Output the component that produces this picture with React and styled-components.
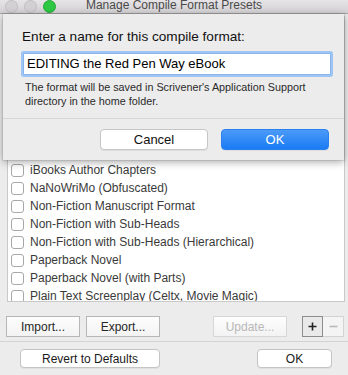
import React from 'react';
import styled, { createGlobalStyle } from 'styled-components';

const GlobalStyle = createGlobalStyle`
  html, body {
    margin: 0;
    padding: 0;
    background: #ececec;
  }
  body {
    font-family: "Liberation Sans", Arial, sans-serif;
    -webkit-font-smoothing: antialiased;
  }
`;

const Window = styled.div`
  position: relative;
  width: 348px;
  height: 375px;
  overflow: hidden;
  background: #ececec;
  display: flex;
  flex-direction: column;
`;

const TitleBar = styled.div`
  height: 13px;
  flex: none;
  display: grid;
  grid-template-columns: 1fr auto 1fr;
  align-items: start;
  background: linear-gradient(to bottom, #e6e4e6, #d4d2d4);
  border-bottom: 1px solid #a9a9a9;
`;

const Lights = styled.div`
  display: flex;
  gap: 5px;
  padding-left: 5px;
  margin-top: 0;
`;

const Light = styled.span`
  width: 11px;
  height: 11px;
  border-radius: 50%;
  background: ${p => (p.$green ? '#2ec845' : '#d3d1d3')};
  border: 1px solid ${p => (p.$green ? '#23a936' : '#c1bfc1')};
  & + & { margin-left: 1px; }
`;

const Title = styled.div`
  font-size: 12px;
  line-height: 13px;
  color: #4a4a4a;
  margin-top: -1px;
  white-space: nowrap;
`;

const Body = styled.div`
  position: relative;
  flex: 1;
  display: flex;
  flex-direction: column;
`;

const ListSection = styled.div`
  padding: 2px 3px 0 7px;
`;

const List = styled.div`
  height: 284px;
  box-sizing: content-box;
  background: #fff;
  border: 1px solid #c9c9c9;
  overflow: hidden;
  padding-top: 0;
`;

const ScrollOffset = styled.div`
  height: 144px;
`;

const Row = styled.label`
  height: 18px;
  display: flex;
  align-items: center;
  padding-left: 3px;
  font-size: 12px;
  color: #3a3a3a;
  white-space: nowrap;
`;

const Check = styled.span`
  width: 11px;
  height: 11px;
  flex: none;
  border: 1px solid #a8a8a8;
  border-radius: 3px;
  background: #fff;
  margin-right: 6px;
`;

const ToolRow = styled.div`
  display: flex;
  align-items: center;
  padding: 14px 4px 0 6px;
`;

const Bevel = styled.button`
  height: 21px;
  width: ${p => p.$w || 74}px;
  padding: 0;
  font-family: inherit;
  font-size: 12px;
  color: ${p => (p.$disabled ? '#b7b7b7' : '#262626')};
  background: linear-gradient(to bottom, #fdfdfd, #f3f3f3);
  border: 1px solid ${p => (p.$disabled ? '#d6d6d6' : '#b6b6b6')};
  border-radius: 0;
  margin-left: ${p => p.$ml || 0}px;
`;

const Spacer = styled.div`
  flex: 1;
`;

const Segment = styled.div`
  display: flex;
  margin-left: 15px;
`;

const SegButton = styled.button`
  width: 21px;
  height: 21px;
  padding: 0;
  display: flex;
  align-items: center;
  justify-content: center;
  background: ${p => (p.$active ? '#e9e9e9' : '#f4f4f4')};
  border: 1px solid ${p => (p.$active ? '#8c8c8c' : '#d3d3d3')};
  border-left-width: ${p => (p.$active ? 1 : 0)}px;
`;

const Divider = styled.div`
  height: 1px;
  background: #d3d3d3;
  margin-top: 4px;
`;

const BottomRow = styled.div`
  display: flex;
  align-items: center;
  justify-content: space-between;
  padding: 7px 16px 0 20px;
`;

const Push = styled.button`
  height: 19px;
  width: ${p => p.$w}px;
  padding: 0;
  font-family: inherit;
  font-size: 12px;
  color: #1a1a1a;
  background: #fff;
  border: 1px solid #c4c4c4;
  border-radius: 4px;
  box-shadow: 0 1px 0 rgba(0, 0, 0, 0.05);
`;

const Sheet = styled.div`
  position: absolute;
  top: 0;
  left: 3px;
  width: 341px;
  height: 146px;
  background: #ececec;
  box-shadow: 0 2px 8px rgba(0, 0, 0, 0.35), 0 0 0 1px rgba(0, 0, 0, 0.08);
  display: flex;
  flex-direction: column;
`;

const SheetTop = styled.div`
  padding: 14px 13px 0 20px;
  height: 105px;
  box-sizing: border-box;
  border-bottom: 1px solid #d6d6d6;
`;

const Prompt = styled.div`
  font-size: 13.6px;
  line-height: 17px;
  color: #111;
  margin-left: -1px;
`;

const Field = styled.div`
  margin-top: 8px;
  height: 22px;
  box-sizing: border-box;
  background: #fff;
  border: 1px solid #86b4ef;
  box-shadow: 0 0 0 2px #9fc5f5;
  border-radius: 1px;
  font-size: 13px;
  line-height: 20px;
  padding-left: 3px;
  color: #000;
  white-space: nowrap;
`;

const Note = styled.div`
  margin-top: 5px;
  margin-left: 2px;
  font-size: 10.8px;
  line-height: 14px;
  color: #2a2a2a;
`;

const SheetButtons = styled.div`
  display: flex;
  justify-content: flex-end;
  gap: 13px;
  padding: 10px 15px 0 0;
`;

const SheetButton = styled.button`
  width: 108px;
  height: 21px;
  padding: 0;
  font-family: inherit;
  font-size: 13px;
  border-radius: 4px;
  color: ${p => (p.$primary ? '#fff' : '#111')};
  background: ${p => (p.$primary ? 'linear-gradient(to bottom, #4b9af8, #1a7bf4)' : '#fff')};
  border: 1px solid ${p => (p.$primary ? '#2a80ef' : '#c6c6c6')};
  box-shadow: 0 1px 0 rgba(0, 0, 0, 0.06);
`;

const presets = [
  'iBooks Author Chapters',
  'NaNoWriMo (Obfuscated)',
  'Non-Fiction Manuscript Format',
  'Non-Fiction with Sub-Heads',
  'Non-Fiction with Sub-Heads (Hierarchical)',
  'Paperback Novel',
  'Paperback Novel (with Parts)',
  'Plain Text Screenplay (Celtx, Movie Magic)',
];

const Plus = () => (
  <svg width="9" height="9" viewBox="0 0 9 9">
    <path d="M4.5 0.5v8M0.5 4.5h8" stroke="#222" strokeWidth="1.6" />
  </svg>
);

const Minus = () => (
  <svg width="9" height="9" viewBox="0 0 9 9">
    <path d="M0.5 4.5h8" stroke="#b9b9b9" strokeWidth="1.6" />
  </svg>
);

export default function App() {
  return (
    <Window>
      <GlobalStyle />
      <TitleBar>
        <Lights>
          <Light />
          <Light />
          <Light $green />
        </Lights>
        <Title>Manage Compile Format Presets</Title>
        <div />
      </TitleBar>
      <Body>
        <ListSection>
          <List>
            <ScrollOffset />
            {presets.map(name => (
              <Row key={name}>
                <Check />
                {name}
              </Row>
            ))}
          </List>
        </ListSection>
        <ToolRow>
          <Bevel>Import...</Bevel>
          <Bevel $ml={6}>Export...</Bevel>
          <Spacer />
          <Bevel $disabled>Update...</Bevel>
          <Segment>
            <SegButton $active><Plus /></SegButton>
            <SegButton><Minus /></SegButton>
          </Segment>
        </ToolRow>
        <Divider />
        <BottomRow>
          <Push $w={140}>Revert to Defaults</Push>
          <Push $w={75}>OK</Push>
        </BottomRow>

        <Sheet>
          <SheetTop>
            <Prompt>Enter a name for this compile format:</Prompt>
            <Field>EDITING the Red Pen Way eBook</Field>
            <Note>
              The format will be saved in Scrivener's Application Support
              <br />
              directory in the home folder.
            </Note>
          </SheetTop>
          <SheetButtons>
            <SheetButton>Cancel</SheetButton>
            <SheetButton $primary>OK</SheetButton>
          </SheetButtons>
        </Sheet>
      </Body>
    </Window>
  );
}
